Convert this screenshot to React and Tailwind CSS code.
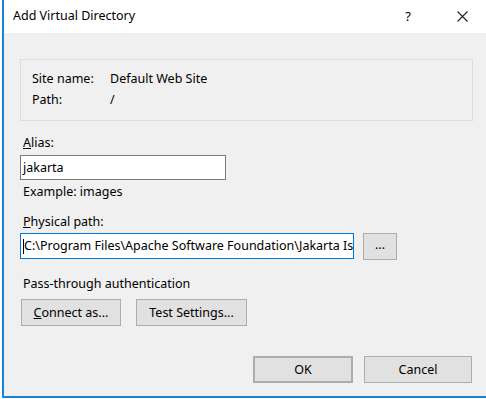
import React from 'react';

const font = { fontFamily: '"Noto Sans", "Liberation Sans", sans-serif' };

const Btn = ({ children, className = '' }) => (
  <div
    className={`h-[27px] flex items-center justify-center bg-[#e1e1e1] border border-[#adadad] text-[12.5px] text-black ${className}`}
  >
    {children}
  </div>
);

const App = () => {
  return (
    <div className="w-[486px] h-[399px] bg-white pl-[2px] overflow-hidden" style={font}>
      <div className="h-[398px] border-l-2 border-b-2 border-[#1883d7] flex flex-col">
        {/* Title bar */}
        <div className="h-[33px] bg-white flex items-center shrink-0">
          <span className="ml-[9px] text-[12.5px] text-black">Add Virtual Directory</span>
          <span className="ml-auto mr-[6px] w-[14px] text-center text-[13px] text-black">?</span>
          <svg className="ml-[36px] mr-[18px]" width="11" height="11" viewBox="0 0 11 11">
            <path d="M0.5 0.5 L10.5 10.5 M10.5 0.5 L0.5 10.5" stroke="#222" strokeWidth="1.1" />
          </svg>
        </div>

        {/* Body */}
        <div className="flex-1 bg-[#f0f0f0] text-[12.5px] text-black leading-[16px]">
          {/* Site info box */}
          <div className="mt-[26px] ml-[16px] w-[453px] h-[62px] border border-[#dcdcdc] pt-[11px] pl-[11px]">
            <div className="flex">
              <span className="w-[78px]">Site name:</span>
              <span>Default Web Site</span>
            </div>
            <div className="flex mt-[5px]">
              <span className="w-[78px]">Path:</span>
              <span>/</span>
            </div>
          </div>

          <div className="mt-[14px] ml-[19px]">
            <span className="underline">A</span>lias:
          </div>
          <div className="mt-[4px] ml-[16px] w-[206px] h-[25px] bg-white border border-[#7a7a7a] flex items-center pl-[2px]">
            jakarta
          </div>
          <div className="mt-[4px] ml-[19px]">Example: images</div>

          <div className="mt-[14px] ml-[19px]">
            <span className="underline">P</span>hysical path:
          </div>
          <div className="mt-[3px] ml-[16px] flex">
            <div className="w-[334px] h-[26px] bg-white border border-[#0078d7] flex items-center pl-[2px] overflow-hidden whitespace-nowrap">
              <span className="w-px h-[15px] bg-black shrink-0" />
              C:\Program Files\Apache Software Foundation\Jakarta Is
            </div>
            <Btn className="ml-[9px] w-[34px] h-[26px] pb-[4px]">...</Btn>
          </div>

          <div className="mt-[16px] ml-[19px]">Pass-through authentication</div>
          <div className="mt-[7px] ml-[17px] flex gap-[15px]">
            <Btn className="w-[100px]">
              <span>
                <span className="underline">C</span>onnect as...
              </span>
            </Btn>
            <Btn className="w-[111px]">Test Settings...</Btn>
          </div>

          <div className="mt-[30px] ml-[249px] flex gap-[11px]">
            <Btn className="w-[100px] border-2 border-[#0078d7]">OK</Btn>
            <Btn className="w-[108px]">Cancel</Btn>
          </div>
        </div>
      </div>
    </div>
  );
};

export default App;
